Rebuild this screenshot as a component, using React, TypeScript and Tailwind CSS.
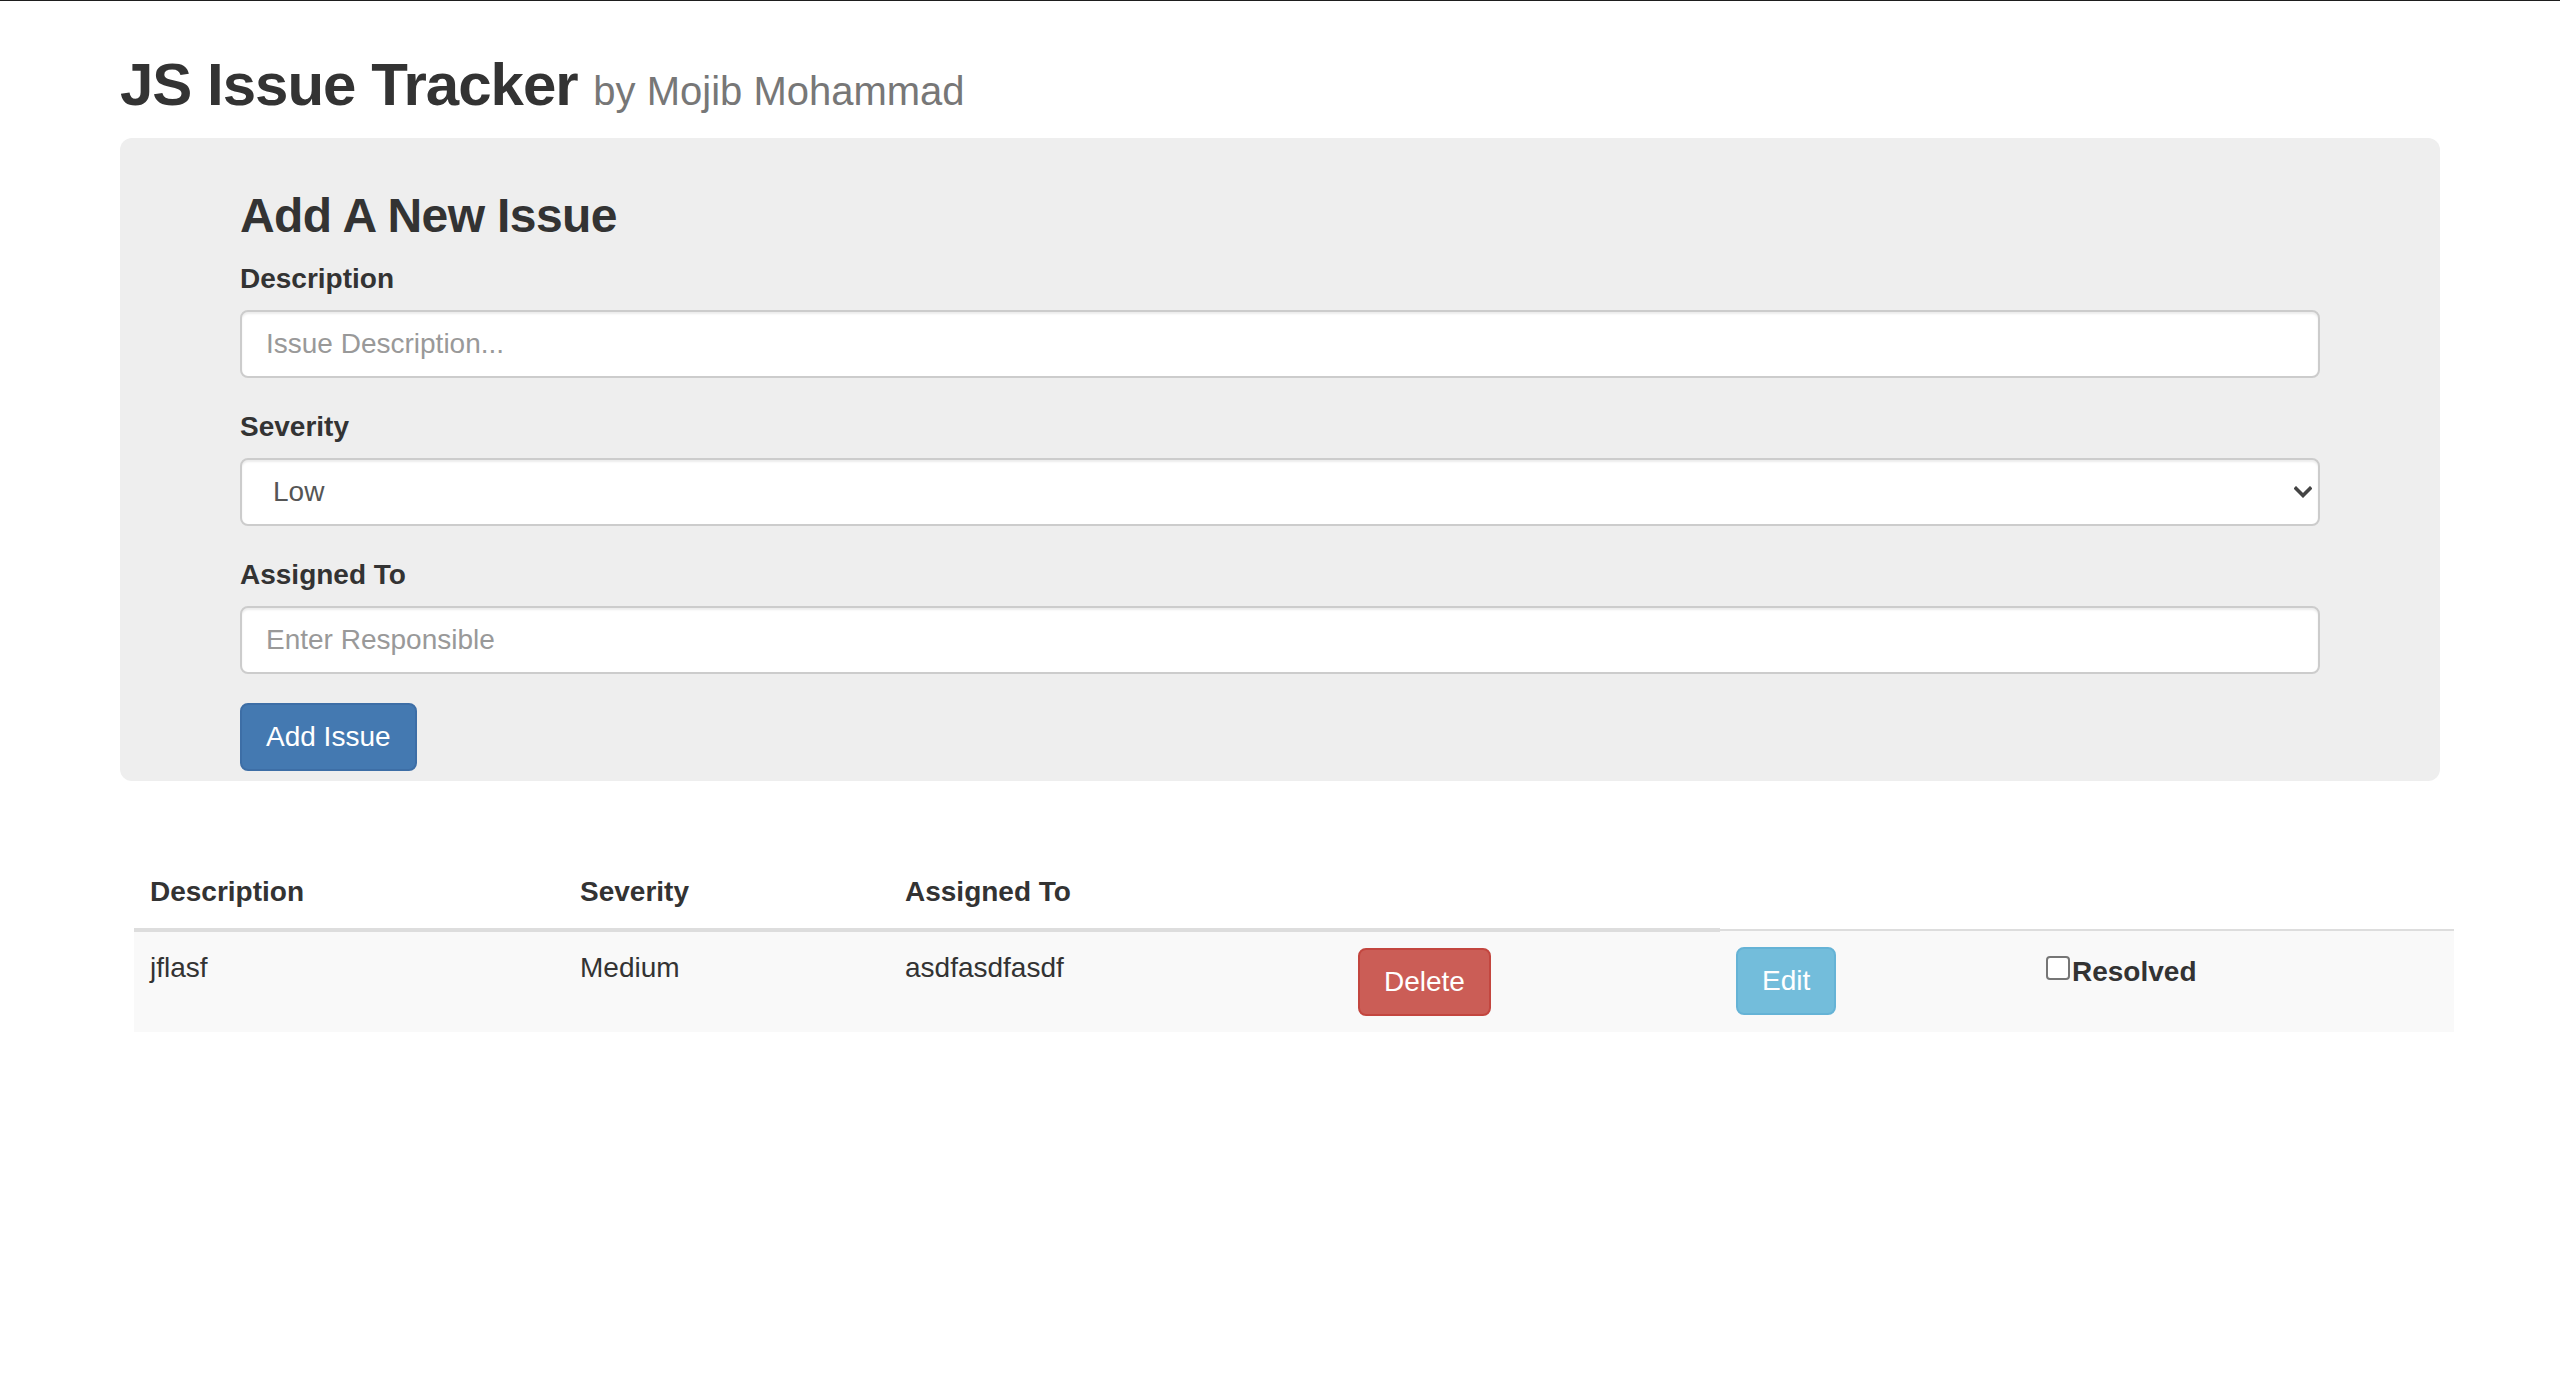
import React, { useState } from 'react';

interface Issue {
  description: string;
  severity: string;
  assignedTo: string;
  resolved: boolean;
}

const ISSUES: Issue[] = [
  { description: 'jflasf', severity: 'Medium', assignedTo: 'asdfasdfasdf', resolved: false },
];

const inputClass =
  'block w-full h-[68px] px-[24px] py-[12px] text-[28px] leading-[40px] text-[#555] bg-white border-2 border-[#ccc] rounded-[8px] shadow-[inset_0_2px_2px_rgba(0,0,0,0.075)] outline-none placeholder:text-[#999]';

const ChevronDown = () => (
  <svg width="18" height="12" viewBox="0 0 18 12" className="absolute right-[8px] top-1/2 -translate-y-1/2 pointer-events-none">
    <path d="M2 2.5 L9 9.5 L16 2.5" fill="none" stroke="#444" strokeWidth="3.6" strokeLinecap="square" />
  </svg>
);

export default function App() {
  const [description, setDescription] = useState('');
  const [severity, setSeverity] = useState('Low');
  const [assignedTo, setAssignedTo] = useState('');

  return (
    <div className="min-h-screen bg-white border-t border-[#1e1e1e] text-[#333] font-['Liberation_Sans',Arial,sans-serif]">
      <div className="pl-[120px]">
        {/* heading */}
        <h1 className="mt-[51px] mb-[14px] text-[60px] leading-[66px] font-bold tracking-[-1px] whitespace-nowrap">
          JS Issue Tracker{' '}
          <small className="text-[40px] font-normal text-[#777] tracking-normal">by Mojib Mohammad</small>
        </h1>

        {/* jumbotron form */}
        <div className="w-[2320px] rounded-[12px] bg-[#eee] px-[120px] pt-[51px] pb-[10px]">
          <h3 className="text-[48px] leading-[53px] font-bold tracking-[-0.6px] mb-[17px]">Add A New Issue</h3>
          <form onSubmit={(e) => e.preventDefault()}>
            <div className="mb-[29px]">
              <label className="block text-[28px] leading-[40px] font-bold mb-[11px]">Description</label>
              <input
                type="text"
                className={inputClass}
                placeholder="Issue Description..."
                value={description}
                onChange={(e) => setDescription(e.target.value)}
              />
            </div>
            <div className="mb-[29px]">
              <label className="block text-[28px] leading-[40px] font-bold mb-[11px]">Severity</label>
              <div className="relative">
                <select
                  className={inputClass + ' appearance-none pl-[31px] text-[#333]'}
                  value={severity}
                  onChange={(e) => setSeverity(e.target.value)}
                >
                  <option>Low</option>
                  <option>Medium</option>
                  <option>High</option>
                </select>
                <ChevronDown />
              </div>
            </div>
            <div className="mb-[29px]">
              <label className="block text-[28px] leading-[40px] font-bold mb-[11px]">Assigned To</label>
              <input
                type="text"
                className={inputClass}
                placeholder="Enter Responsible"
                value={assignedTo}
                onChange={(e) => setAssignedTo(e.target.value)}
              />
            </div>
            <button
              type="submit"
              className="inline-block px-[24px] py-[12px] text-[28px] leading-[40px] text-white bg-[#4479b1] border-2 border-[#3d6ea6] rounded-[8px]"
            >
              Add Issue
            </button>
          </form>
        </div>

        {/* issues table */}
        <table className="ml-[14px] mt-[75px] w-[2320px] table-fixed border-collapse text-[28px] leading-[40px]">
          <colgroup>
            <col className="w-[430px]" />
            <col className="w-[325px]" />
            <col className="w-[453px]" />
            <col className="w-[378px]" />
            <col className="w-[310px]" />
            <col className="w-[424px]" />
          </colgroup>
          <thead>
            <tr>
              <th className="p-[16px] text-left font-bold align-bottom border-b-4 border-[#ddd]">Description</th>
              <th className="p-[16px] text-left font-bold align-bottom border-b-4 border-[#ddd]">Severity</th>
              <th className="p-[16px] text-left font-bold align-bottom border-b-4 border-[#ddd]">Assigned To</th>
              <th className="p-[16px] border-b-4 border-[#ddd]"></th>
            </tr>
          </thead>
          <tbody>
            {ISSUES.map((issue, i) => (
              <tr key={i} className="bg-[#f9f9f9]">
                <td className="p-[16px] align-top border-t-2 border-[#ddd]">{issue.description}</td>
                <td className="p-[16px] align-top border-t-2 border-[#ddd]">{issue.severity}</td>
                <td className="p-[16px] align-top border-t-2 border-[#ddd]">{issue.assignedTo}</td>
                <td className="p-[16px] align-top border-t-2 border-[#ddd]">
                  <button className="inline-block px-[24px] py-[12px] text-[28px] leading-[40px] text-white bg-[#cb5d56] border-2 border-[#c3463f] rounded-[8px]">
                    Delete
                  </button>
                </td>
                <td className="p-[16px] align-top border-t-2 border-[#ddd]">
                  <button className="inline-block px-[24px] py-[12px] text-[28px] leading-[40px] text-white bg-[#73bddb] border-2 border-[#65b3d6] rounded-[8px]">
                    Edit
                  </button>
                </td>
                <td className="p-[16px] align-top border-t-2 border-[#ddd]">
                  <label className="inline-flex items-start font-bold">
                    <input
                      type="checkbox"
                      defaultChecked={issue.resolved}
                      className="appearance-none w-[24px] h-[24px] mt-[9px] mr-[2px] bg-white border-2 border-[#767676] rounded-[4px] checked:bg-[#4479b1]"
                    />
                    <span className="pt-[5px]">Resolved</span>
                  </label>
                </td>
              </tr>
            ))}
          </tbody>
        </table>
      </div>
    </div>
  );
}
